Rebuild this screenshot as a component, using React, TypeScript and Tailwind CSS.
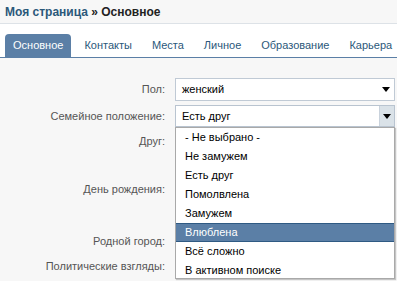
import React from "react";

const Arrow = () => (
  <svg width="8" height="5" viewBox="0 0 8 5" className="block">
    <path d="M0 0 H8 L4 5 Z" fill="#000" />
  </svg>
);

const items = [
  "- Не выбрано -",
  "Не замужем",
  "Есть друг",
  "Помолвлена",
  "Замужем",
  "Влюблена",
  "Всё сложно",
  "В активном поиске",
];

export default function App() {
  const tabs = ["Контакты", "Места", "Личное", "Образование", "Карьера"];
  return (
    <div
      className="relative w-[397px] h-[281px] overflow-hidden bg-[#f7f7f7] text-[11px]"
      style={{ fontFamily: '"Liberation Sans", Arial, sans-serif' }}
    >
      <div className="h-[24px] bg-[#f7f7f7] border-b border-[#dde2e7] pl-[5px] flex items-center">
        <span className="text-[12px] font-bold text-[#2b587a] leading-none">
          Моя страница <span className="text-[#222]">» Основное</span>
        </span>
      </div>
      <div className="h-[34px] bg-white border-b border-[#5b7fa6] pl-[5px] flex items-end">
        <div className="h-[23px] rounded-t-[4px] bg-[#5b7fa6] text-white px-[8px] flex items-center">
          Основное
        </div>
        <div className="flex ml-[3px]">
          {tabs.map((t) => (
            <div key={t} className="h-[23px] px-[10px] flex items-center text-[#2b587a] whitespace-nowrap">
              {t}
            </div>
          ))}
        </div>
      </div>

      <div className="flex flex-col text-[#555]">
        <div className="mt-[20px] h-[23px] flex items-center">
          <div className="w-[165px] text-right">Пол:</div>
          <div className="ml-[10px] w-[220px] h-[23px] bg-white border border-[#c0cad5] flex items-center justify-between pl-[6px] pr-[4px] text-black">
            <span>женский</span>
            <Arrow />
          </div>
        </div>
        <div className="mt-[4px] h-[22px] flex items-center">
          <div className="w-[165px] text-right">Семейное положение:</div>
          <div className="ml-[10px] w-[220px] h-[22px] bg-white border border-[#b9c4d0] flex items-stretch text-black">
            <span className="flex-1 flex items-center pl-[6px]">Есть друг</span>
            <span className="w-[15px] bg-[#dae2e8] border-l border-[#c9d2dc] flex items-center justify-center">
              <Arrow />
            </span>
          </div>
        </div>
        <div className="mt-[3px] h-[22px] flex items-center">
          <div className="w-[165px] text-right">Друг:</div>
        </div>
        <div className="mt-[26px] h-[22px] flex items-center">
          <div className="w-[165px] text-right">День рождения:</div>
        </div>
        <div className="mt-[30px] h-[22px] flex items-center">
          <div className="w-[165px] text-right">Родной город:</div>
        </div>
        <div className="mt-[3px] h-[22px] flex items-center">
          <div className="w-[165px] text-right">Политические взгляды:</div>
        </div>
      </div>

      <div className="absolute left-[175px] top-[127px] w-[220px] h-[152px] bg-white border border-[#a9a9a9] shadow-[1px_1px_1px_rgba(0,0,0,0.2)] overflow-hidden">
        {items.map((it, i) =>
          i === 5 ? (
            <div
              key={it}
              className="h-[19px] pl-[9px] flex items-center bg-[#5b7fa6] text-white border border-[#2f5a83] -mx-px"
            >
              {it}
            </div>
          ) : (
            <div key={it} className="h-[19px] pl-[9px] flex items-center text-black">
              {it}
            </div>
          )
        )}
      </div>
    </div>
  );
}
